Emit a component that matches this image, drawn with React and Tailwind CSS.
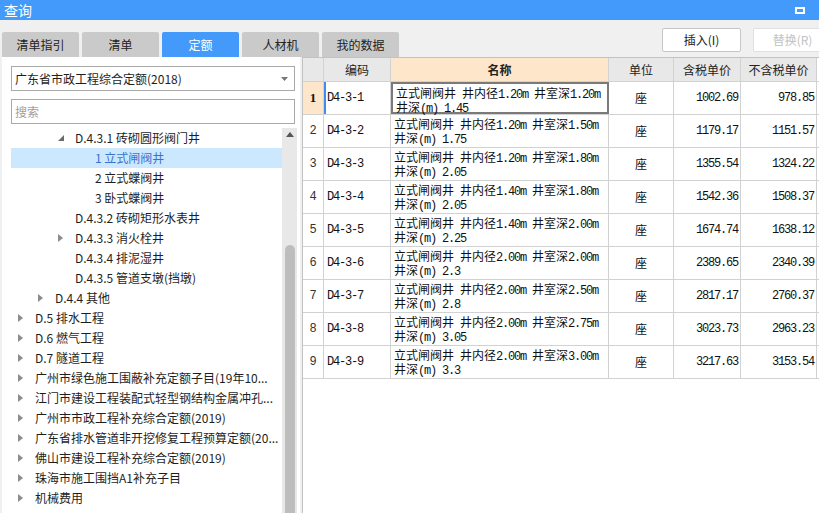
import React from "react";

const rows = [
    ["D4-3-1", "1.20", "1.20", "1.45", "1002.69", "978.85"],
    ["D4-3-2", "1.20", "1.50", "1.75", "1179.17", "1151.57"],
    ["D4-3-3", "1.20", "1.80", "2.05", "1355.54", "1324.22"],
    ["D4-3-4", "1.40", "1.80", "2.05", "1542.36", "1508.37"],
    ["D4-3-5", "1.40", "2.00", "2.25", "1674.74", "1638.12"],
    ["D4-3-6", "2.00", "2.00", "2.3", "2389.65", "2340.39"],
    ["D4-3-7", "2.00", "2.50", "2.8", "2817.17", "2760.37"],
    ["D4-3-8", "2.00", "2.75", "3.05", "3023.73", "2963.23"],
    ["D4-3-9", "2.00", "3.00", "3.3", "3217.63", "3153.54"],
];

const tree = [
    { lvl: 2, arrow: "open", text: "D.4.3.1 砖砌圆形阀门井" },
    { lvl: 3, text: "1 立式闸阀井", sel: true },
    { lvl: 3, text: "2 立式蝶阀井" },
    { lvl: 3, text: "3 卧式蝶阀井" },
    { lvl: 2, text: "D.4.3.2 砖砌矩形水表井" },
    { lvl: 2, arrow: "closed", text: "D.4.3.3 消火栓井" },
    { lvl: 2, text: "D.4.3.4 排泥湿井" },
    { lvl: 2, text: "D.4.3.5 管道支墩(挡墩)" },
    { lvl: 1, arrow: "closed", text: "D.4.4 其他" },
    { lvl: 0, arrow: "closed", text: "D.5 排水工程" },
    { lvl: 0, arrow: "closed", text: "D.6 燃气工程" },
    { lvl: 0, arrow: "closed", text: "D.7 隧道工程" },
    { lvl: 0, arrow: "closed", text: "广州市绿色施工围蔽补充定额子目(19年10..." },
    { lvl: 0, arrow: "closed", text: "江门市建设工程装配式轻型钢结构金属冲孔..." },
    { lvl: 0, arrow: "closed", text: "广州市市政工程补充综合定额(2019)" },
    { lvl: 0, arrow: "closed", text: "广东省排水管道非开挖修复工程预算定额(20..." },
    { lvl: 0, arrow: "closed", text: "佛山市建设工程补充综合定额(2019)" },
    { lvl: 0, arrow: "closed", text: "珠海市施工围挡A1补充子目" },
    { lvl: 0, arrow: "closed", text: "机械费用" },
];

const tabs = ["清单指引", "清单", "定额", "人材机", "我的数据"];

// SimSun-ish: half-width runs get a narrowed mono font
function sim(s) {
    return s
        .split(/([\x00-\xff]+)/)
        .filter(Boolean)
        .map((p, i) =>
            /^[\x00-\xff]+$/.test(p) ? (
                <span key={i} className="whitespace-pre font-['Liberation_Mono'] tracking-[-1.2px]">{p}</span>
            ) : (
                <span key={i}>{p}</span>
            )
        );
}

function Arrow({ type }) {
    if (type === "open") {
        return (
            <svg width="6" height="6" viewBox="0 0 6 6">
                <path d="M6 0 L6 6 L0 6 Z" fill="#6b6b6b" />
            </svg>
        );
    }
    return (
        <svg width="5" height="8" viewBox="0 0 5 8">
            <path d="M0 0 L5 4 L0 8 Z" fill="#8c8c8c" />
        </svg>
    );
}

export default function App() {
    return (
        <div className="flex h-[513px] w-[819px] flex-col overflow-hidden bg-[#f0f0f0] font-['Noto_Sans_CJK_SC',sans-serif] text-[12px] text-[#1e1e1e]">
            {/* title bar */}
            <div className="flex h-[20px] shrink-0 items-center justify-between bg-[#439afa] pl-[4px] pr-[14px]">
                <span className="text-[14px] leading-none text-white">查询</span>
                <div className="h-[7px] w-[10px] border-2 border-white"></div>
            </div>

            {/* tabs + buttons */}
            <div className="flex h-[37px] shrink-0 items-end justify-between pl-[2px]">
                <div className="flex gap-[3px]">
                    {tabs.map((t) => (
                        <div
                            key={t}
                            className={
                                "flex h-[25px] w-[77px] items-center justify-center rounded-t-[2px] " +
                                (t === "定额" ? "bg-[#439afa] text-white" : "bg-[#cacaca] text-[#222]")
                            }
                        >
                            {t}
                        </div>
                    ))}
                </div>
                <div className="mb-[5px] flex gap-[12px] self-end">
                    <div className="flex h-[24px] w-[79px] items-center justify-center rounded-[2px] border border-[#c6c6c6] bg-white text-[#222]">
                        插入(I)
                    </div>
                    <div className="-mr-[13px] flex h-[24px] w-[79px] items-center justify-center rounded-[2px] border border-[#e0e0e0] bg-white text-[#c2c2c2]">
                        替换(R)
                    </div>
                </div>
            </div>

            {/* body */}
            <div className="flex min-h-0 flex-1">
                {/* left panel */}
                <div className="ml-[2px] flex w-[298px] shrink-0 flex-col bg-white pl-[9px] pt-[9px]">
                    <div className="flex h-[25px] w-[284px] items-center justify-between border border-[#a9a9a9] pl-[3px] pr-[6px]">
                        <span>广东省市政工程综合定额(2018)</span>
                        <svg width="7" height="4" viewBox="0 0 7 4">
                            <path d="M0 0 L7 0 L3.5 4 Z" fill="#777" />
                        </svg>
                    </div>
                    <div className="mt-[8px] flex h-[25px] w-[284px] items-center border border-[#a9a9a9] pl-[3px] text-[#a0a0a0]">
                        搜索
                    </div>
                    <div className="mt-[4px] flex min-h-0 flex-1">
                        <div className="w-[271px]">
                            {tree.map((n, i) => (
                                <div
                                    key={i}
                                    className={
                                        "relative flex h-[20px] items-center whitespace-nowrap " +
                                        (n.sel ? "bg-[#cce8ff] text-[#3a72cf]" : "")
                                    }
                                    style={{ paddingLeft: 24 + 20 * n.lvl }}
                                >
                                    {n.arrow && (
                                        <span
                                            className="absolute flex items-center"
                                            style={{ left: 7 + 20 * n.lvl }}
                                        >
                                            <Arrow type={n.arrow} />
                                        </span>
                                    )}
                                    <span className="leading-[20px]">{n.text}</span>
                                </div>
                            ))}
                        </div>
                        {/* scrollbar */}
                        <div className="flex w-[15px] flex-col items-center bg-[#e8e8e8]">
                            <svg className="mt-[4px]" width="8" height="5" viewBox="0 0 8 5">
                                <path d="M0 5 L4 0 L8 5 Z" fill="#555" />
                            </svg>
                            <div className="mt-[108px] w-[10px] flex-1 rounded-t-[5px] bg-[#bdbdbd]"></div>
                        </div>
                    </div>
                </div>

                {/* right panel */}
                <div className="ml-[2px] flex min-w-0 flex-1 flex-col border-l border-t border-[#c2c2c2] bg-white">
                    {/* header */}
                    <div className="flex h-[24px] shrink-0 border-b border-[#d2d2d2] text-[12px] text-[#222]">
                        <div className="w-[21px] border-r border-[#d2d2d2] bg-[#e8e8e8]"></div>
                        <div className="flex w-[67px] items-center justify-center border-r border-[#d2d2d2] bg-[#e8e8e8]">编码</div>
                        <div className="flex w-[218px] items-center justify-center border-r border-[#d2d2d2] bg-[#fde6c9] font-bold">名称</div>
                        <div className="flex w-[65px] items-center justify-center border-r border-[#d2d2d2] bg-[#e8e8e8]">单位</div>
                        <div className="flex w-[67px] items-center justify-center border-r border-[#d2d2d2] bg-[#e8e8e8]">含税单价</div>
                        <div className="flex w-[76px] items-center justify-center border-r border-[#d2d2d2] bg-[#e8e8e8]">不含税单价</div>
                    </div>
                    {rows.map((r, i) => (
                        <div key={r[0]} className="flex h-[33px] w-[516px] shrink-0 border-b border-[#d2d2d2] text-[12px] text-[#111]">
                            <div
                                className={
                                    "flex w-[21px] items-center justify-center border-r border-[#d2d2d2] " +
                                    (i === 0
                                        ? "bg-[#fde6c9] font-['Liberation_Serif'] text-[13px] font-bold"
                                        : "font-['Liberation_Mono'] text-[#333]")
                                }
                            >
                                {i + 1}
                            </div>
                            <div
                                className={
                                    "flex w-[67px] items-center border-r border-[#d2d2d2] " +
                                    (i === 0 ? "border-l-2 border-l-[#3d8ef0] pl-[1px]" : "pl-[3px]")
                                }
                            >
                                {sim(r[0])}
                            </div>
                            <div
                                className={
                                    "flex w-[218px] flex-col whitespace-nowrap pl-[3px] pt-[2px] " +
                                    (i === 0 ? "border-2 border-[#7a7a7a] pl-[1px] pt-0" : "border-r border-[#d2d2d2]")
                                }
                            >
                                <div className="flex h-[14px] items-baseline leading-[14px]">{sim(`立式闸阀井 井内径${r[1]}m 井室深${r[2]}m`)}</div>
                                <div className="flex h-[14px] items-baseline leading-[14px]">{sim(`井深(m) ${r[3]}`)}</div>
                            </div>
                            <div className="flex w-[65px] items-center justify-center border-r border-[#d2d2d2]">座</div>
                            <div className="flex w-[67px] items-center justify-end border-r border-[#d2d2d2] pr-[2px]">{sim(r[4])}</div>
                            <div className="flex w-[76px] items-center justify-end border-r border-[#d2d2d2] pr-[2px]">{sim(r[5])}</div>
                        </div>
                    ))}
                </div>
            </div>
        </div>
    );
}
